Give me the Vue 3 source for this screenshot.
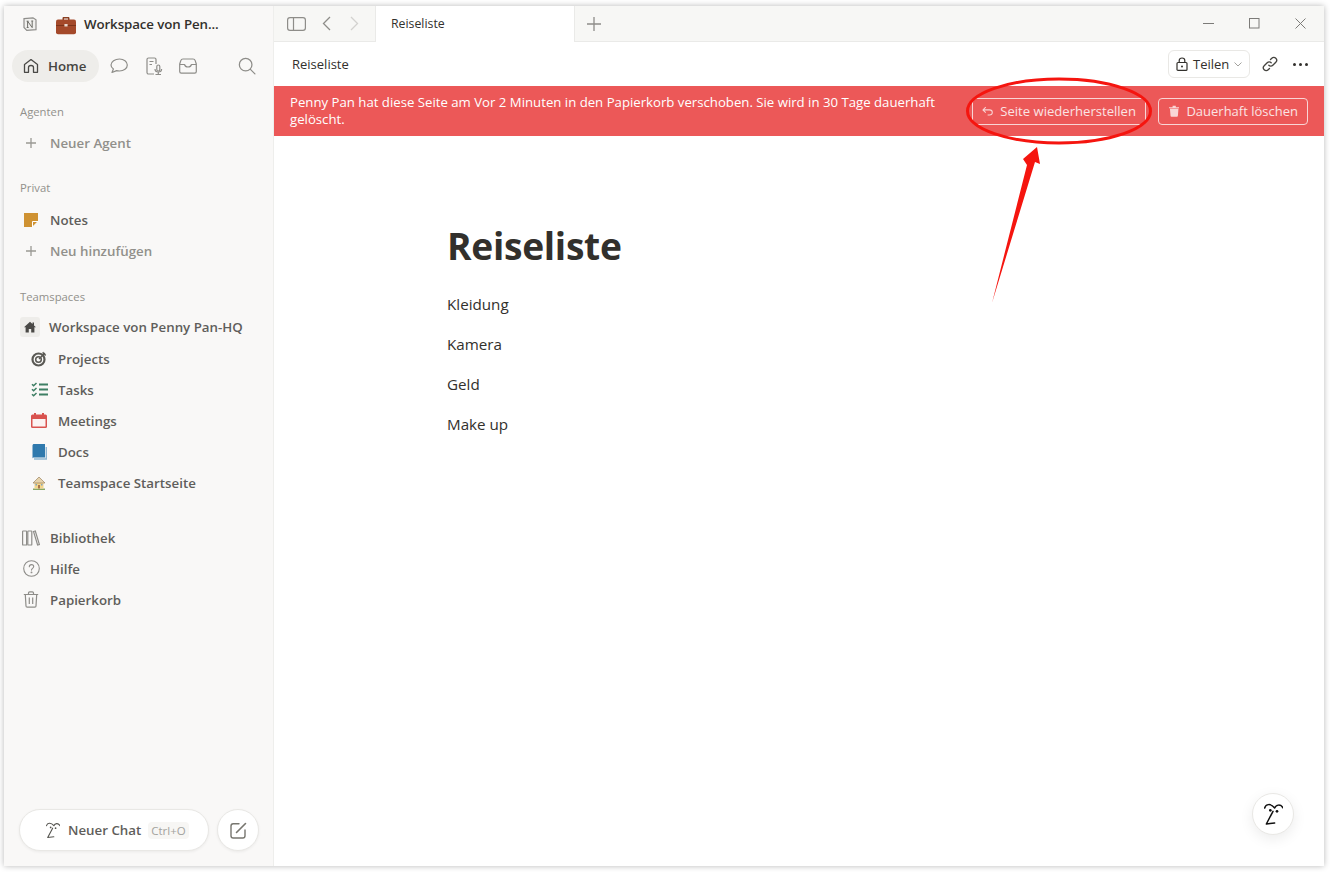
<template>
  <div class="screen">
    <div class="window">
      <aside class="sidebar">
        <div class="ws-row">
          <svg class="notion" width="16" height="16" viewBox="0 0 16 16">
            <path d="M2 2.600 11 1.800l3 2v9.800l-9.200.8-2.800-3z" fill="#f1f0ee" stroke="#8f8e8b" stroke-width="1.200" />
            <path d="M5.600 5.200v6.200M5.600 5.200l4.600 6.400V5M4.600 5.200h2M9.300 5h1.900M4.700 11.500h1.900" fill="none" stroke="#6f6e69" stroke-width="1" />
          </svg>
          <svg class="briefcase" width="20" height="20" viewBox="0 0 20 20">
            <path d="M6.500 5V3.200c0-.7.500-1.200 1.200-1.200h4.600c.7 0 1.200.5 1.200 1.200V5h-1.500V3.500h-4V5z" fill="#8a3f22" />
            <rect x="0" y="4.600" width="20" height="14.600" rx="2" fill="#a4492a" />
            <rect x="0" y="10" width="20" height="1" fill="#7d3419" />
            <rect x="8.400" y="9" width="3.200" height="2.600" rx=".5" fill="#e8d9cf" />
          </svg>
          <span class="ws-name">Workspace von Pen...</span>
        </div>

        <div class="nav-row">
          <div class="home-pill">
            <svg width="18" height="18" viewBox="0 0 18 18" fill="none" stroke="#4a4946" stroke-width="1.300" stroke-linejoin="round">
              <path d="M2.500 15.300V7.600L9 2.600l6.500 5v7.700h-4V10.600c0-1.200-1-2.100-2.500-2.100s-2.500.9-2.500 2.100v4.700z" />
            </svg>
            <span>Home</span>
          </div>
          <svg class="nav-ico chat" width="20" height="20" viewBox="0 0 20 20" fill="none" stroke="#8e8d89" stroke-width="1.200" stroke-linejoin="round">
            <path d="M10.500 3c4.300 0 7.800 2.500 7.800 6s-3.500 6-7.800 6c-1 0-2-.1-2.900-.4L3 16.500l1.400-3.400C2.900 12 2 10.600 2 9c0-3.500 4-6 8.500-6z" />
          </svg>
          <svg class="nav-ico memo" width="20" height="20" viewBox="0 0 20 20" fill="none" stroke="#8e8d89" stroke-width="1.200">
            <path d="M10 18H4.500C3.700 18 3 17.300 3 16.500V3.500C3 2.700 3.700 2 4.500 2h6c.8 0 1.500.7 1.500 1.500V8" />
            <path d="M5.500 5.500h4M5.500 8.500h2.500" />
            <rect x="12.800" y="9" width="3" height="6" rx="1.500" />
            <path d="M11 13c0 1.800 1.300 3 3.300 3s3.300-1.200 3.300-3M14.300 16v2M11.500 18.500h5.500" />
          </svg>
          <svg class="nav-ico inbox" width="18" height="16" viewBox="0 0 18 16" fill="none" stroke="#8e8d89" stroke-width="1.200" stroke-linejoin="round">
            <path d="M4 1h10c1.200 0 1.900.6 2.200 1.600L17.300 6v7.500c0 .9-.7 1.600-1.600 1.600H2.300c-.9 0-1.600-.7-1.600-1.600V6l1.100-3.400C2.100 1.600 2.800 1 4 1z" />
            <path d="M.9 6.500h4.600c.4 1.500 1.700 2.500 3.500 2.500s3.100-1 3.500-2.500h4.600" />
          </svg>
          <svg class="nav-ico search" width="18" height="18" viewBox="0 0 20 20" fill="none" stroke="#8e8d89" stroke-width="1.400" stroke-linecap="round">
            <circle cx="8.500" cy="8.500" r="7" />
            <path d="m13.800 13.800 5 5" />
          </svg>
        </div>

        <div class="section-label first">Agenten</div>
        <div class="item muted">
          <span class="ico"><svg width="12" height="12" viewBox="0 0 12 12" stroke="#9a9994" stroke-width="1.300"><path d="M6 1v10M1 6h10" /></svg></span>
          <span>Neuer Agent</span>
        </div>

        <div class="section-label">Privat</div>
        <div class="item">
          <span class="ico">
            <svg width="14" height="14" viewBox="0 0 14 14">
              <path d="M0 0h14v8L8 14H0z" fill="#cf9232" />
              <path d="M8.500 14V8.500H14z" fill="#cf9232" stroke="#fff" stroke-width="1" />
            </svg>
          </span>
          <span>Notes</span>
        </div>
        <div class="item muted">
          <span class="ico"><svg width="12" height="12" viewBox="0 0 12 12" stroke="#9a9994" stroke-width="1.300"><path d="M6 1v10M1 6h10" /></svg></span>
          <span>Neu hinzufügen</span>
        </div>

        <div class="section-label teamspaces">Teamspaces</div>
        <div class="item team">
          <span class="home-box">
            <svg width="12" height="12" viewBox="0 0 12 12"><path d="M6 .8 0 6.200h1.600V11.500h3.200V8h2.400v3.500h3.200V6.200H12L10 4.400V1.500H8.500v1.500z" fill="#4a4946" /></svg>
          </span>
          <span>Workspace von Penny Pan-HQ</span>
        </div>
        <div v-for="page in teamPages" :key="page.name" class="item sub">
          <span class="sub-ico">
            <svg v-if="page.icon === 'target'" width="16" height="16" viewBox="0 0 16 16" fill="none" stroke="#5a5954">
              <circle cx="7.500" cy="8.500" r="6" stroke-width="2.200" />
              <circle cx="7.500" cy="8.500" r="2.800" stroke-width="1.500" />
              <path d="m8 8 6-6M12 1l.5 2.500L15 4" stroke-width="1.300" />
            </svg>
            <svg v-else-if="page.icon === 'tasks'" width="17" height="15" viewBox="0 0 17 15" fill="none" stroke="#3e7f64">
              <path d="m1 2.300 1.600 1.500L5.500 1M1 7.300l1.600 1.500L5.500 6M1 12.300l1.600 1.500L5.500 11" stroke-width="1.500" />
              <path d="M8 2.500h9M8 7.500h9M8 12.500h9" stroke-width="2" />
            </svg>
            <svg v-else-if="page.icon === 'calendar'" width="16" height="15" viewBox="0 0 16 15">
              <rect x="0" y="1.500" width="16" height="13.500" rx="1.500" fill="#d9534f" />
              <rect x="3" y="0" width="2" height="3" fill="#d9534f" />
              <rect x="11" y="0" width="2" height="3" fill="#d9534f" />
              <rect x="1.500" y="6" width="13" height="7.500" fill="#fbf3f2" />
            </svg>
            <svg v-else-if="page.icon === 'book'" width="15" height="16" viewBox="0 0 15 16">
              <path d="M2 15h12.300V3" fill="none" stroke="#8fb6d2" stroke-width="1.400" />
              <path d="M.5 1.500C.5 .7 1.200 0 2 0h11v13.500H2c-.8 0-1.500.5-1.500 1z" fill="#2f79ad" />
            </svg>
            <svg v-else width="14" height="14" viewBox="0 0 14 14">
              <rect x="1" y="12.500" width="12" height="1.500" fill="#8aa765" />
              <path d="M2.500 12.500V6.500h9v6z" fill="#f4d58a" />
              <path d="M1 7 7 1l6 6z" fill="#e6d3ac" stroke="#8f7350" stroke-width=".6" />
              <rect x="6" y="9" width="2" height="3.500" fill="#a9764a" />
              <rect x="3.500" y="8" width="1.500" height="1.500" fill="#7fa5c4" />
              <rect x="9" y="8" width="1.500" height="1.500" fill="#7fa5c4" />
            </svg>
          </span>
          <span>{{ page.name }}</span>
        </div>

        <div class="bottom-links">
          <div class="item">
            <span class="ico">
              <svg width="18" height="16" viewBox="0 0 18 16" fill="none" stroke="#8e8d89" stroke-width="1.200">
                <rect x=".6" y="1" width="4" height="14" rx=".6" />
                <rect x="5.800" y="1" width="4" height="14" rx=".6" />
                <path d="m11.500 1.500 1.800-.5 4.100 13.500-1.800.5z" />
              </svg>
            </span>
            <span>Bibliothek</span>
          </div>
          <div class="item">
            <span class="ico">
              <svg width="17" height="17" viewBox="0 0 17 17" fill="none" stroke="#8e8d89" stroke-width="1.100">
                <circle cx="8.500" cy="8.500" r="7.800" />
                <path d="M6.300 6.700c0-1.300 1-2.100 2.200-2.100s2.200.8 2.200 2c0 1.700-2.200 1.800-2.200 3.500" stroke-linecap="round" />
                <circle cx="8.500" cy="12.400" r=".4" fill="#8e8d89" />
              </svg>
            </span>
            <span>Hilfe</span>
          </div>
          <div class="item">
            <span class="ico">
              <svg width="16" height="17" viewBox="0 0 16 17" fill="none" stroke="#8e8d89" stroke-width="1.200">
                <path d="M.8 3.500h14.400M5.500 3.500V2c0-.7.500-1.200 1.200-1.200h2.600c.7 0 1.200.5 1.200 1.200v1.500" />
                <path d="M2.300 3.500 3 15c0 .6.500 1.200 1.200 1.200h7.600c.7 0 1.200-.6 1.200-1.200l.7-11.500" />
                <path d="M6.300 6.500V13M9.700 6.500V13" />
              </svg>
            </span>
            <span>Papierkorb</span>
          </div>
        </div>

        <div class="chat-row">
          <div class="new-chat">
            <svg width="14" height="17" viewBox="0 0 57 69" fill="none" stroke="#55544f" stroke-width="4.500" stroke-linecap="round" stroke-linejoin="round">
              <path d="M2 15C5 3 20 0 32 15 36 5 50 2 57 15" />
              <path d="M27 25 7 63 32 60" />
              <circle cx="19" cy="22" r="3.500" fill="#55544f" stroke="none" />
              <circle cx="39" cy="25" r="3.500" fill="#55544f" stroke="none" />
            </svg>
            <span class="chat-label">Neuer Chat</span>
            <span class="kbd">Ctrl+O</span>
          </div>
          <div class="compose">
            <svg width="17" height="17" viewBox="0 0 17 17" fill="none" stroke="#77766f" stroke-width="1.400" stroke-linecap="round">
              <path d="M9 1.800H3.200C1.900 1.800 1 2.700 1 4v9.800C1 15.100 1.900 16 3.200 16h9.600c1.300 0 2.200-.9 2.200-2.200V8" />
              <path d="m6.500 10.500 9-9" stroke-width="1.600" />
            </svg>
          </div>
        </div>
      </aside>

      <main class="main">
        <div class="tabbar">
          <div class="tab-controls">
            <svg width="19" height="14" viewBox="0 0 19 14" fill="none" stroke="#8e8d89" stroke-width="1.200">
              <rect x=".6" y=".6" width="17.800" height="12.800" rx="2.400" />
              <path d="M6.500 .6v12.800" />
            </svg>
            <svg width="9" height="15" viewBox="0 0 9 15" fill="none" stroke="#8e8d89" stroke-width="1.300"><path d="M8 1 1.500 7.500 8 14" /></svg>
            <svg width="9" height="15" viewBox="0 0 9 15" fill="none" stroke="#d3d2cf" stroke-width="1.300"><path d="m1 1 6.500 6.500L1 14" /></svg>
          </div>
          <div class="tab">Reiseliste</div>
          <svg class="tab-add" width="14" height="14" viewBox="0 0 14 14" stroke="#8e8d89" stroke-width="1.300"><path d="M7 0v14M0 7h14" /></svg>
          <div class="win-controls">
            <svg width="11" height="11" viewBox="0 0 11 11" stroke="#7c7b78"><path d="M0 5.500h11" /></svg>
            <svg width="11" height="11" viewBox="0 0 11 11" fill="none" stroke="#7c7b78"><rect x=".5" y=".5" width="9.500" height="9.500" /></svg>
            <svg width="11" height="11" viewBox="0 0 11 11" stroke="#7c7b78"><path d="m.5 .5 10 10M10.500 .5l-10 10" /></svg>
          </div>
        </div>

        <div class="topbar">
          <span class="crumb">Reiseliste</span>
          <div class="share">
            <svg width="12" height="14" viewBox="0 0 12 14" fill="none" stroke="#32302c" stroke-width="1.200">
              <rect x="1" y="5.500" width="10" height="7.900" rx="1" />
              <path d="M3.200 5.500V3.600C3.200 2 4.400 1 6 1s2.800 1 2.800 2.600v1.900" />
              <circle cx="6" cy="9.400" r="1" fill="#32302c" stroke="none" />
            </svg>
            <span>Teilen</span>
            <svg width="8" height="5" viewBox="0 0 8 5" fill="none" stroke="#a3a29e"><path d="m.5 .5 3.500 3.500 3.500-3.500" /></svg>
          </div>
          <svg class="link" width="16" height="16" viewBox="0 0 16 16" fill="none" stroke="#45443f" stroke-width="1.300" stroke-linecap="round">
            <path d="M6.800 9.200a2.800 2.800 0 0 0 4 0l3-3a2.800 2.800 0 0 0-4-4L8.500 3.500" />
            <path d="M9.200 6.800a2.800 2.800 0 0 0-4 0l-3 3a2.800 2.800 0 0 0 4 4l1.300-1.300" />
          </svg>
          <div class="dots"><i></i><i></i><i></i></div>
        </div>

        <div class="banner">
          <p>Penny Pan hat diese Seite am Vor 2 Minuten in den Papierkorb verschoben. Sie wird in 30 Tage dauerhaft gelöscht.</p>
          <button class="banner-btn restore">
            <svg width="12" height="10" viewBox="0 0 12 10" fill="none" stroke="#f9d5d5" stroke-width="1.100">
              <path d="M4 .8 1 3.800l3 3M1 3.800h7c1.700 0 3 1.100 3 2.700S9.700 9.200 8 9.200H6" />
            </svg>
            Seite wiederherstellen
          </button>
          <button class="banner-btn remove">
            <svg width="11" height="12" viewBox="0 0 11 12" fill="#f9d5d5">
              <path d="M0 2h11v1H0zM3.800 .5h3.400V2H3.800zM1 3.500h9l-.6 7.500c0 .6-.4 1-1 1H2.600c-.6 0-1-.4-1-1z" />
            </svg>
            Dauerhaft löschen
          </button>
        </div>

        <article class="page">
          <h1>Reiseliste</h1>
          <p v-for="line in lines" :key="line">{{ line }}</p>
        </article>

        <div class="help-fab">
          <svg width="19" height="23" viewBox="0 0 57 69" fill="none" stroke="#111" stroke-width="4.500" stroke-linecap="round" stroke-linejoin="round">
            <path d="M2 15C5 3 20 0 32 15 36 5 50 2 57 15" />
            <path d="M27 25 7 63 32 60" />
            <circle cx="19" cy="22" r="4" fill="#111" stroke="none" />
            <circle cx="39" cy="25" r="4" fill="#111" stroke="none" />
          </svg>
        </div>
      </main>
    </div>

    <svg class="annotation" width="1330" height="872" viewBox="0 0 1330 872">
      <ellipse cx="1059" cy="111" rx="91.500" ry="32" fill="none" stroke="#f5150f" stroke-width="3" />
      <path d="M992 303 1027 165 1023 159 1037 147 1040 164 1035 162z" fill="#f5150f" />
    </svg>
  </div>
</template>

<script setup>
const teamPages = [
  { name: 'Projects', icon: 'target' },
  { name: 'Tasks', icon: 'tasks' },
  { name: 'Meetings', icon: 'calendar' },
  { name: 'Docs', icon: 'book' },
  { name: 'Teamspace Startseite', icon: 'house' }
]

const lines = ['Kleidung', 'Kamera', 'Geld', 'Make up']
</script>

<style>
html, body {
  margin: 0;
  background: #fff;
}
</style>

<style scoped>
.screen {
  position: relative;
  width: 1330px;
  height: 872px;
  padding: 6px 6px 6px 4px;
  box-sizing: border-box;
  background: #fff;
  font-family: "Open Sans", "Noto Sans", sans-serif;
  overflow: hidden;
}
.window {
  display: flex;
  height: 100%;
  background: #fff;
  box-shadow: 0 0 6px rgba(0, 0, 0, 0.28);
}
.sidebar {
  width: 270px;
  flex: none;
  display: flex;
  flex-direction: column;
  background: #f9f8f7;
  border-right: 1px solid #eeeeec;
  box-sizing: border-box;
  color: #5f5e5b;
  font-size: 13.300px;
  font-weight: 560;
}
.ws-row {
  display: flex;
  align-items: center;
  height: 36px;
  padding-left: 18px;
  color: #32302c;
}
.briefcase {
  margin-left: 18px;
  margin-top: 1px;
}
.ws-name {
  margin-left: 8px;
  font-size: 13.300px;
  font-weight: 600;
  letter-spacing: -0.1px;
}
.nav-row {
  display: flex;
  align-items: center;
  height: 32px;
  margin-top: 8px;
  padding-left: 8px;
}
.home-pill {
  display: flex;
  align-items: center;
  gap: 8px;
  height: 32px;
  width: 87px;
  padding-left: 10px;
  box-sizing: border-box;
  border-radius: 16px;
  background: #eeedea;
  color: #45443f;
  font-weight: 600;
}
.nav-ico {
  flex: none;
}
.chat { margin-left: 10px; }
.memo { margin-left: 15px; }
.inbox { margin-left: 15px; }
.search { margin-left: 41px; }
.section-label {
  height: 20px;
  line-height: 20px;
  margin-top: 20px;
  margin-bottom: 6px;
  padding-left: 16px;
  font-size: 11.300px;
  font-weight: 500;
  color: #91908b;
}
.section-label.first {
  margin-bottom: 5px;
}
.section-label.teamspaces {
  margin-top: 21px;
}
.item {
  display: flex;
  align-items: center;
  height: 31px;
  flex: none;
}
.item.muted {
  color: #91908b;
}
.ico {
  display: flex;
  justify-content: center;
  align-items: center;
  width: 22px;
  margin-left: 16px;
  margin-right: 8px;
}
.home-box {
  display: flex;
  justify-content: center;
  align-items: center;
  width: 20px;
  height: 20px;
  margin-left: 16px;
  margin-right: 9px;
  border-radius: 3px;
  background: #eeedea;
}
.team {
  margin-top: -2px;
}
.sub-ico {
  display: flex;
  justify-content: center;
  align-items: center;
  width: 18px;
  margin-left: 26px;
  margin-right: 10px;
}
.team + .sub {
  margin-top: 1px;
}
.bottom-links {
  margin-top: 24px;
}
.chat-row {
  display: flex;
  gap: 8px;
  margin-top: auto;
  margin-bottom: 15px;
  padding-left: 15px;
}
.new-chat {
  display: flex;
  align-items: center;
  width: 190px;
  height: 42px;
  padding-left: 26px;
  background: #fff;
  border: 1px solid #e9e8e5;
  border-radius: 21px;
  box-shadow: 0 1px 3px rgba(0, 0, 0, 0.06);
  box-sizing: border-box;
}
.chat-label {
  margin-left: 8px;
}
.kbd {
  margin-left: 7px;
  padding: 1px 3px;
  border-radius: 4px;
  background: #f7f6f4;
  font-size: 11.500px;
  font-weight: 400;
  color: #a3a29e;
}
.compose {
  display: flex;
  align-items: center;
  justify-content: center;
  width: 42px;
  height: 42px;
  background: #fff;
  border: 1px solid #e9e8e5;
  border-radius: 50%;
  box-shadow: 0 1px 3px rgba(0, 0, 0, 0.06);
  box-sizing: border-box;
}
.main {
  position: relative;
  flex: 1;
  min-width: 0;
  display: flex;
  flex-direction: column;
  color: #32302c;
}
.tabbar {
  display: flex;
  align-items: center;
  height: 36px;
  flex: none;
  background: #f7f7f5;
  border-bottom: 1px solid #eaeae8;
  box-sizing: border-box;
}
.tab-controls {
  display: flex;
  align-items: center;
  width: 101px;
  padding-left: 13px;
  box-sizing: border-box;
}
.tab-controls svg:nth-child(2) {
  margin-left: 16px;
}
.tab-controls svg:nth-child(3) {
  margin-left: 19px;
}
.tab {
  display: flex;
  align-items: center;
  width: 200px;
  height: 36px;
  padding-left: 15px;
  box-sizing: border-box;
  background: #fff;
  border-left: 1px solid #eaeae8;
  border-right: 1px solid #eaeae8;
  font-size: 12.300px;
  font-weight: 500;
}
.tab-add {
  margin-left: 12px;
}
.win-controls {
  display: flex;
  align-items: center;
  gap: 35px;
  margin-left: auto;
  margin-right: 18px;
}
.topbar {
  display: flex;
  align-items: center;
  height: 44px;
  flex: none;
  padding-left: 18px;
  font-size: 13px;
}
.crumb {
  margin-right: auto;
}
.share {
  display: flex;
  align-items: center;
  gap: 5px;
  width: 82px;
  height: 28px;
  padding-left: 7px;
  border: 1px solid #e9e8e5;
  border-radius: 6px;
  box-sizing: border-box;
}
.link {
  margin-left: 12px;
}
.dots {
  display: flex;
  gap: 3px;
  margin-left: 15px;
  margin-right: 16px;
}
.dots i {
  width: 3px;
  height: 3px;
  border-radius: 50%;
  background: #32302c;
}
.banner {
  display: flex;
  align-items: center;
  height: 50px;
  flex: none;
  padding: 0 16px;
  background: #ec5858;
  color: #fff;
  box-sizing: border-box;
}
.banner p {
  width: 660px;
  margin: 0 auto 0 0;
  font-size: 13.200px;
  line-height: 17px;
}
.banner-btn {
  display: flex;
  align-items: center;
  gap: 7px;
  flex: none;
  height: 27px;
  padding: 0 9px;
  background: transparent;
  border: 1px solid #f9d5d5;
  border-radius: 4px;
  color: #fbe3e3;
  font-family: inherit;
  font-size: 13px;
  white-space: nowrap;
}
.restore {
  width: 174px;
  margin-right: 12px;
  font-size: 13.100px;
}
.remove {
  width: 150px;
  padding-left: 10px;
}
.page {
  padding: 86px 0 0 173px;
}
.page h1 {
  margin: 0 0 22px;
  font-size: 37.200px;
  line-height: 48px;
  font-weight: 700;
  letter-spacing: -0.3px;
}
.page p {
  margin: 0 0 16px;
  font-size: 15.200px;
  line-height: 24px;
}
.help-fab {
  position: absolute;
  right: 30px;
  bottom: 31px;
  display: flex;
  align-items: center;
  justify-content: center;
  width: 42px;
  height: 42px;
  background: #fff;
  border: 1px solid #e9e8e5;
  border-radius: 50%;
  box-sizing: border-box;
  box-shadow: 0 4px 14px rgba(0, 0, 0, 0.08);
}
.annotation {
  position: absolute;
  left: 0;
  top: 0;
  pointer-events: none;
}
</style>
